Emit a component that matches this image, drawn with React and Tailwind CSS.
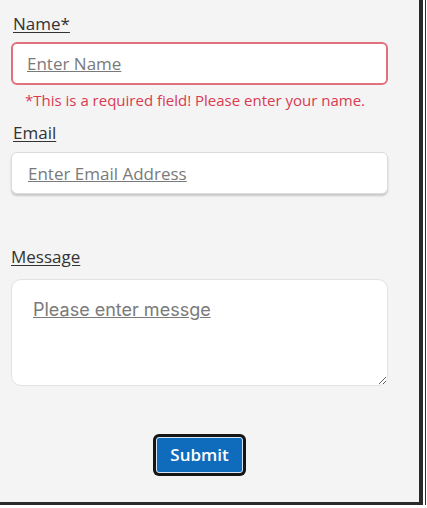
export default function App() {
  return (
    <div className="w-[427px] h-[508px] bg-white">
      <div className="flex h-[505px]">
        <form
          className="w-[423px] h-full bg-[#f4f4f4] border-r-4 border-b-[3px] border-[#2a2a2a] pl-[11px] pr-[31px] pt-[13px] flex flex-col"
          style={{ fontFamily: '"Open Sans", "Noto Sans", sans-serif' }}
          onSubmit={e => e.preventDefault()}
        >
          {/* Name */}
          <label className="ml-[2px] text-[17px] leading-[22px] text-[#333] underline underline-offset-2 self-start">
            Name*
          </label>
          <input
            className="mt-[7px] h-[43px] w-full bg-white border-2 border-[#e0707c] rounded-[6px] px-[14px] text-[17px] outline-none placeholder:text-[#7a7a7a] placeholder:underline"
            placeholder="Enter Name"
          />
          <p className="mt-[5px] ml-[14px] text-[15px] leading-[20px] text-[#d93a50]">
            *This is a required field! Please enter your name.
          </p>

          {/* Email */}
          <label className="mt-[12px] ml-[2px] text-[17px] leading-[22px] text-[#333] underline underline-offset-2 self-start">
            Email
          </label>
          <input
            className="mt-[8px] h-[42px] w-full bg-white border border-[#dcdcdc] rounded-[6px] shadow-[0_2px_2px_rgba(0,0,0,0.18)] px-[16px] text-[17px] outline-none placeholder:text-[#7a7a7a] placeholder:underline"
            placeholder="Enter Email Address"
          />

          {/* Message */}
          <label className="mt-[52px] text-[17px] leading-[22px] text-[#333] underline underline-offset-2 self-start">
            Message
          </label>
          <textarea
            className="mt-[11px] h-[107px] w-full bg-white border border-[#e2e2e2] rounded-[10px] px-[21px] py-[16px] text-[18px] outline-none resize-y placeholder:text-[#7a7a7a] placeholder:underline"
            style={{ fontFamily: 'Inter, "Liberation Sans", sans-serif' }}
            placeholder="Please enter messge"
          />

          <div className="mt-[51px] flex justify-center">
            <button
              type="submit"
              className="h-[36px] px-[13px] bg-[#0f6cbd] border border-[#d8e6f4] rounded-[3px] ring-[3px] ring-[#151515] text-white text-[17px] font-semibold"
            >
              Submit
            </button>
          </div>
        </form>
        <div className="w-[2px]" />
        <div className="w-[1px] bg-[#2a2a2a] h-full" />
      </div>
    </div>
  )
}
